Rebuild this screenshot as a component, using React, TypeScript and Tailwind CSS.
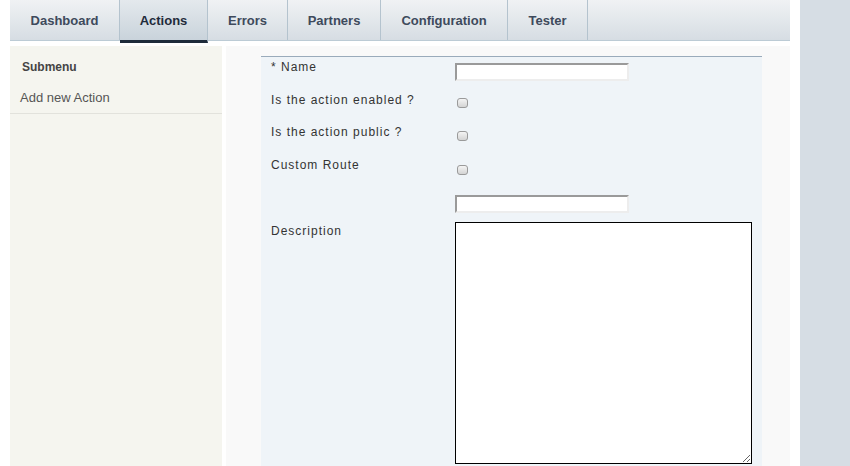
import React from 'react';

const TABS = [
  { label: 'Dashboard', w: 'w-[110px]' },
  { label: 'Actions', w: 'w-[88px]', active: true },
  { label: 'Errors', w: 'w-[80px]' },
  { label: 'Partners', w: 'w-[93px]' },
  { label: 'Configuration', w: 'w-[127px]' },
  { label: 'Tester', w: 'w-[80px]' },
];

function Checkbox() {
  return (
    <span className="ml-[2px] block h-[10px] w-[11px] rounded-[3px] border border-[#9a9a9a] bg-gradient-to-b from-[#f4f4f4] to-[#d4d4d4]" />
  );
}

function TextInput() {
  return (
    <div className="h-[18px] w-[174px] border-2 border-t-[#9a9a9a] border-l-[#9a9a9a] border-r-[#ededed] border-b-[#ededed] bg-white" />
  );
}

function Row({
  h,
  labelTop,
  fieldTop,
  label,
  children,
}: {
  h: string;
  labelTop: string;
  fieldTop: string;
  label?: string;
  children: React.ReactNode;
}) {
  return (
    <div className={`flex ${h}`}>
      <div className={`w-[184px] ${labelTop} text-[12px] leading-[14px] tracking-[1px] text-[#333]`}>{label}</div>
      <div className={fieldTop}>{children}</div>
    </div>
  );
}

export default function App() {
  return (
    <div className="flex h-[466px] w-[850px] overflow-hidden bg-white font-['Liberation_Sans',Arial,sans-serif]">
      <div className="ml-[10px] flex w-[780px] flex-col">
        {/* tab bar */}
        <div className="flex h-[41px] border-b border-[#bccbd5] bg-gradient-to-b from-[#f0f2f4] to-[#d6dde3]">
          {TABS.map((t) => (
            <div
              key={t.label}
              className={`${t.w} flex items-center justify-center border-r border-[#b4c3ce] pt-[2px] text-[13px] font-bold ${
                t.active
                  ? 'h-[43px] border-b-[3px] border-b-[#1e2b3a] bg-gradient-to-b from-[#e4e9ed] to-[#c9d3db] text-[#1f2b3b]'
                  : 'text-[#3e4a5c]'
              }`}
            >
              {t.label}
            </div>
          ))}
        </div>

        <div className="mt-[5px] flex flex-1">
          {/* sidebar */}
          <div className="w-[212px] bg-[#f5f5ef]">
            <div className="px-[12px] pt-[14px] text-[12px] font-bold leading-[14px] text-[#444]">Submenu</div>
            <div className="border-b border-[#e2e2dc] px-[10px] pb-[8px] pt-[16px] text-[13px] leading-[15px] text-[#555]">
              Add new Action
            </div>
          </div>

          {/* main */}
          <div className="ml-[4px] flex-1 bg-[#f9f9f9] pl-[35px] pr-[28px] pt-[10px]">
            <div className="h-full border-t border-[#9aabbb] bg-[#eff4f8] pl-[10px]">
              <Row h="h-[33px]" labelTop="pt-[3px]" fieldTop="pt-[6px]" label="* Name">
                <TextInput />
              </Row>
              <Row h="h-[33px]" labelTop="pt-[3px]" fieldTop="pt-[8px]" label="Is the action enabled ?">
                <Checkbox />
              </Row>
              <Row h="h-[33px]" labelTop="pt-[2px]" fieldTop="pt-[8px]" label="Is the action public ?">
                <Checkbox />
              </Row>
              <Row h="h-[33px]" labelTop="pt-[2px]" fieldTop="pt-[9px]" label="Custom Route">
                <Checkbox />
              </Row>
              <Row h="h-[30px]" labelTop="pt-0" fieldTop="pt-[6px]">
                <TextInput />
              </Row>
              <Row h="h-[245px]" labelTop="pt-[5px]" fieldTop="pt-[3px]" label="Description">
                <textarea className="block h-[242px] w-[297px] resize border border-black bg-white outline-none" />
              </Row>
            </div>
          </div>
        </div>
      </div>
      <div className="ml-[10px] w-[50px] bg-[#d6dde4]" />
    </div>
  );
}
